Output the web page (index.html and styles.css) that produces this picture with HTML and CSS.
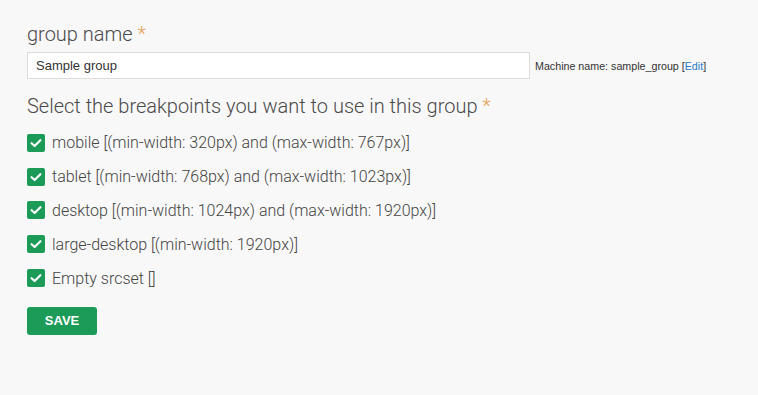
FILE: index.html
```html
<!DOCTYPE html>
<html>
<head>
<meta charset="utf-8">
<link rel="stylesheet" href="styles.css">
</head>
<body>
<form class="form">
  <div class="field">
    <label class="field-label">group name <span class="req">*</span></label>
    <div class="name-row">
      <input class="text-input" type="text" value="Sample group">
      <span class="machine">Machine name: sample_group [<a href="#" class="edit">Edit</a>]</span>
    </div>
  </div>
  <div class="field">
    <div class="field-label">Select the breakpoints you want to use in this group <span class="req">*</span></div>
    <ul class="checks">
      <li class="check"><span class="box"><svg viewBox="0 0 18 18" width="18" height="18"><path d="M4.6 9.2 L7.6 12 L13.4 6.2" fill="none" stroke="#fff" stroke-width="2.2" stroke-linecap="round" stroke-linejoin="round"/></svg></span>mobile [(min-width: 320px) and (max-width: 767px)]</li>
      <li class="check"><span class="box"><svg viewBox="0 0 18 18" width="18" height="18"><path d="M4.6 9.2 L7.6 12 L13.4 6.2" fill="none" stroke="#fff" stroke-width="2.2" stroke-linecap="round" stroke-linejoin="round"/></svg></span>tablet [(min-width: 768px) and (max-width: 1023px)]</li>
      <li class="check"><span class="box"><svg viewBox="0 0 18 18" width="18" height="18"><path d="M4.6 9.2 L7.6 12 L13.4 6.2" fill="none" stroke="#fff" stroke-width="2.2" stroke-linecap="round" stroke-linejoin="round"/></svg></span>desktop [(min-width: 1024px) and (max-width: 1920px)]</li>
      <li class="check"><span class="box"><svg viewBox="0 0 18 18" width="18" height="18"><path d="M4.6 9.2 L7.6 12 L13.4 6.2" fill="none" stroke="#fff" stroke-width="2.2" stroke-linecap="round" stroke-linejoin="round"/></svg></span>large-desktop [(min-width: 1920px)]</li>
      <li class="check"><span class="box"><svg viewBox="0 0 18 18" width="18" height="18"><path d="M4.6 9.2 L7.6 12 L13.4 6.2" fill="none" stroke="#fff" stroke-width="2.2" stroke-linecap="round" stroke-linejoin="round"/></svg></span>Empty srcset []</li>
    </ul>
  </div>
  <button class="save" type="button">SAVE</button>
</form>
</body>
</html>
```
FILE: styles.css
```css
html, body {
  margin: 0;
  padding: 0;
  background: #f8f8f8;
}
body {
  font-family: Roboto, "Liberation Sans", sans-serif;
  color: #444;
}
.form {
  padding: 22px 27px 0 27px;
}
.field-label {
  display: block;
  font-family: Roboto, sans-serif;
  font-weight: 300;
  font-size: 20px;
  line-height: 24px;
  color: #4a4a4a;
}
.req {
  color: #e8a25e;
}
.name-row {
  display: flex;
  align-items: center;
  margin-top: 6px;
  margin-bottom: 15px;
}
.text-input {
  box-sizing: border-box;
  width: 503px;
  height: 27px;
  border: 1px solid #dcdcdc;
  background: #fff;
  padding: 0 8px;
  font-family: "Liberation Sans", Arial, sans-serif;
  font-size: 13px;
  color: #333;
  outline: none;
}
.machine {
  margin-left: 5px;
  font-family: "Liberation Sans", Arial, sans-serif;
  font-size: 10.7px;
  color: #333;
}
.edit {
  color: #2a7bd0;
  text-decoration: none;
}
.checks {
  list-style: none;
  margin: 8px 0 0 0;
  padding: 0;
}
.check {
  display: flex;
  align-items: center;
  height: 33.8px;
  font-family: Roboto, sans-serif;
  font-weight: 300;
  font-size: 16px;
  color: #444;
}
.box {
  display: inline-flex;
  width: 18px;
  height: 18px;
  border-radius: 2px;
  background: #1b9a58;
  margin-right: 7px;
  flex: none;
}
.save {
  margin-top: 12px;
  width: 70px;
  height: 28px;
  border: none;
  border-radius: 3px;
  background: #1b9a58;
  color: #fff;
  font-family: "Liberation Sans", Arial, sans-serif;
  font-weight: bold;
  font-size: 13px;
  padding: 0;
}
```
